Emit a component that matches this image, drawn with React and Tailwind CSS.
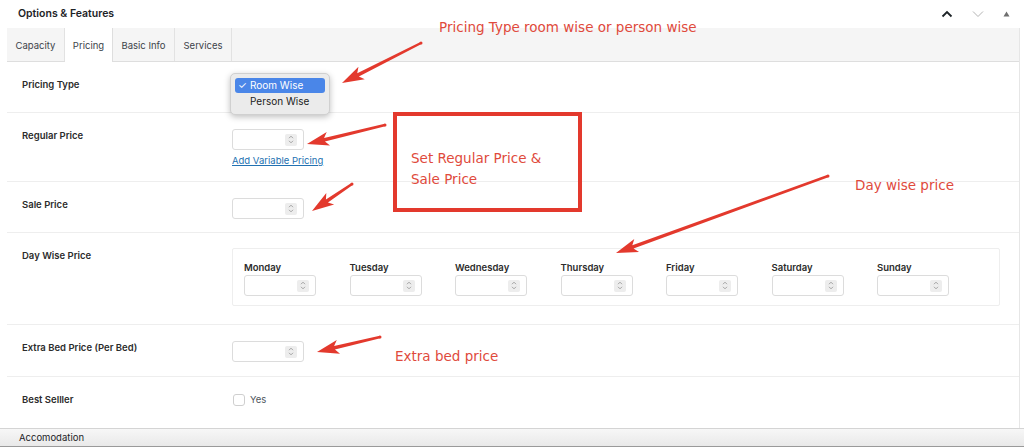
import React from 'react';

const RED = '#e3392d';

const Spinner = () => (
  <div className="w-[12px] h-[12px] bg-[#ededed] rounded-[2px] flex items-center justify-center">
    <svg width="6" height="9" viewBox="0 0 6 9" fill="none" stroke="#9a9a9a" strokeWidth="0.9">
      <path d="M1 3.2 L3 1.2 L5 3.2" />
      <path d="M1 5.8 L3 7.8 L5 5.8" />
    </svg>
  </div>
);

const NumInput = () => (
  <div className="w-[72px] h-[21px] border border-[#dcdcdc] rounded-[3px] bg-white flex items-center justify-end pr-[6px]">
    <Spinner />
  </div>
);

const Row = ({ label, children, className = '' }) => (
  <div className={`flex border-b border-[#eeeeee] pt-[16px] ${className}`}>
    <div className="w-[225px] pl-[15px] mt-[1px] text-[9.5px] leading-[12px] font-semibold text-[#2c2c2c]">{label}</div>
    <div className="flex-1">{children}</div>
  </div>
);

const Arrow = ({ x1, y1, x2, y2 }) => {
  const dx = x2 - x1;
  const dy = y2 - y1;
  const len = Math.hypot(dx, dy);
  const ux = dx / len;
  const uy = dy / len;
  const px = -uy;
  const py = ux;
  const headLen = 22;
  const headW = 7;
  const bx = x2 - ux * headLen;
  const by = y2 - uy * headLen;
  const neckW = 1.8;
  const tailW = 2.4;
  const pts = [
    [x1 + px * tailW * 0.5, y1 + py * tailW * 0.5],
    [bx + ux * 4 + px * neckW, by + uy * 4 + py * neckW],
    [bx + px * headW, by + py * headW],
    [x2, y2],
    [bx - px * headW, by - py * headW],
    [bx + ux * 4 - px * neckW, by + uy * 4 - py * neckW],
    [x1 - px * tailW * 0.5, y1 - py * tailW * 0.5],
  ];
  return (
    <>
      <polygon points={pts.map((p) => p.join(',')).join(' ')} fill={RED} />
      <circle cx={x1} cy={y1} r={tailW / 2 + 0.3} fill={RED} />
    </>
  );
};

const days = ['Monday', 'Tuesday', 'Wednesday', 'Thursday', 'Friday', 'Saturday', 'Sunday'];

export default function App() {
  return (
    <div className="relative w-[1024px] h-[447px] bg-white overflow-hidden" style={{ fontFamily: 'Inter, "Liberation Sans", sans-serif' }}>
      {/* Header */}
      <div className="h-[28px] flex items-center justify-between pl-[18px] pr-[14px]">
        <div className="text-[10.5px] font-semibold text-[#1d2327]">Options &amp; Features</div>
        <div className="flex items-center gap-[19px]">
          <svg width="12" height="8" viewBox="0 0 12 8" fill="none" stroke="#1d2327" strokeWidth="1.8">
            <path d="M1.5 6.5 L6 2 L10.5 6.5" />
          </svg>
          <svg width="12" height="8" viewBox="0 0 12 8" fill="none" stroke="#b4b4b4" strokeWidth="1">
            <path d="M1 1.5 L6 6.5 L11 1.5" />
          </svg>
          <svg width="7" height="6" viewBox="0 0 7 6">
            <path d="M3.5 0.5 L6.5 5.5 L0.5 5.5 Z" fill="#6f6f6f" />
          </svg>
        </div>
      </div>

      <div className="ml-[7px] w-[1013px] border-r border-[#e6e6e6]">
        {/* Tabs */}
        <div className="h-[34px] bg-[#f5f5f5] border-b border-[#dedede] flex text-[9.5px] text-[#3c434a]">
          <div className="w-[58px] pt-[3px] flex items-center justify-center border-r border-[#e2e2e2]">Capacity</div>
          <div className="w-[48px] pt-[3px] flex items-center justify-center bg-white border-r border-[#dedede] -mb-px">Pricing</div>
          <div className="w-[62px] pt-[3px] flex items-center justify-center border-r border-[#e2e2e2]">Basic Info</div>
          <div className="w-[57px] pt-[3px] flex items-center justify-center border-r border-[#e2e2e2]">Services</div>
        </div>

        <Row label="Pricing Type" className="h-[51px]">
          <div className="w-[4px] h-[20px] mt-[6px] ml-[-2px] rounded-l-[3px] bg-[#4a86e8]" />
        </Row>

        <Row label="Regular Price" className="h-[69px]">
          <NumInput />
          <div className="mt-[5px] text-[9.5px] leading-[12px] text-[#2271b1] underline">Add Variable Pricing</div>
        </Row>

        <Row label="Sale Price" className="h-[51px]">
          <NumInput />
        </Row>

        <Row label="Day Wise Price" className="h-[92px]">
          <div className="w-[768px] h-[58px] mt-[-1px] border border-[#eeeeee] rounded-[2px] pl-[11px] pt-[13px] flex">
            {days.map((d) => (
              <div key={d} className="w-[105.5px] shrink-0">
                <div className="text-[9.5px] leading-[12px] font-semibold text-[#2c2c2c] mb-[1px]">{d}</div>
                <NumInput />
              </div>
            ))}
          </div>
        </Row>

        <Row label="Extra Bed Price (Per Bed)" className="h-[52px]">
          <NumInput />
        </Row>

        <div className="flex pt-[16px] h-[51px]">
          <div className="w-[225px] pl-[15px] mt-[1px] text-[9.5px] leading-[12px] font-semibold text-[#2c2c2c]">Best Selller</div>
          <div className="flex items-center gap-[5px] mt-[1px] h-[12px] pl-[1px]">
            <div className="w-[12px] h-[12px] border border-[#cfcfcf] rounded-[3px] bg-white" />
            <span className="text-[9.5px] text-[#50575e]">Yes</span>
          </div>
        </div>
      </div>

      {/* Bottom bar */}
      <div className="h-[19px] pt-[2px] border-t border-[#d4d4d4] bg-gradient-to-b from-[#f7f7f7] to-[#e9e9e9] border-b border-b-[#9a9a9a] flex items-center pl-[19px] text-[9.5px] text-[#1d2327]">
        Accomodation
      </div>

      {/* Native select dropdown */}
      <div className="absolute left-[230px] top-[73px] w-[100px] h-[42px] bg-[#ebebeb] rounded-[5px] shadow-[0_2px_6px_rgba(0,0,0,0.25)] border border-[#d0d0d0] p-[4px] text-[10px]">
        <div className="h-[15px] bg-[#4a86e8] rounded-[3px] text-white flex items-center pl-[3px]">
          <span className="w-[12px] text-[10px]">✓</span>
          <span>Room Wise</span>
        </div>
        <div className="h-[17px] flex items-center pl-[15px] text-[#222]">Person Wise</div>
      </div>

      {/* Annotations */}
      <div className="absolute left-[393px] top-[112px] w-[189px] h-[100px] border-[4px] border-[#e3392d]" />
      <div className="absolute inset-0 pointer-events-none text-[#e04a3c] text-[13.5px]" style={{ fontFamily: '"DejaVu Sans", Verdana, sans-serif' }}>
        <div className="absolute left-[439px] top-[17px]">Pricing Type room wise or person wise</div>
        <div className="absolute left-[411px] top-[148px] leading-[21px]">
          Set Regular Price &amp;<br />Sale Price
        </div>
        <div className="absolute left-[855px] top-[175px]">Day wise price</div>
        <div className="absolute left-[395px] top-[346px]">Extra bed price</div>
      </div>
      <svg className="absolute inset-0 pointer-events-none" width="1024" height="447">
        <Arrow x1={421} y1={43} x2={342} y2={83} />
        <Arrow x1={385} y1={125} x2={307} y2={144} />
        <Arrow x1={352} y1={184} x2={312} y2={211} />
        <Arrow x1={828} y1={176} x2={616} y2={253} />
        <Arrow x1={380} y1={337} x2={317} y2={352} />
      </svg>
    </div>
  );
}
